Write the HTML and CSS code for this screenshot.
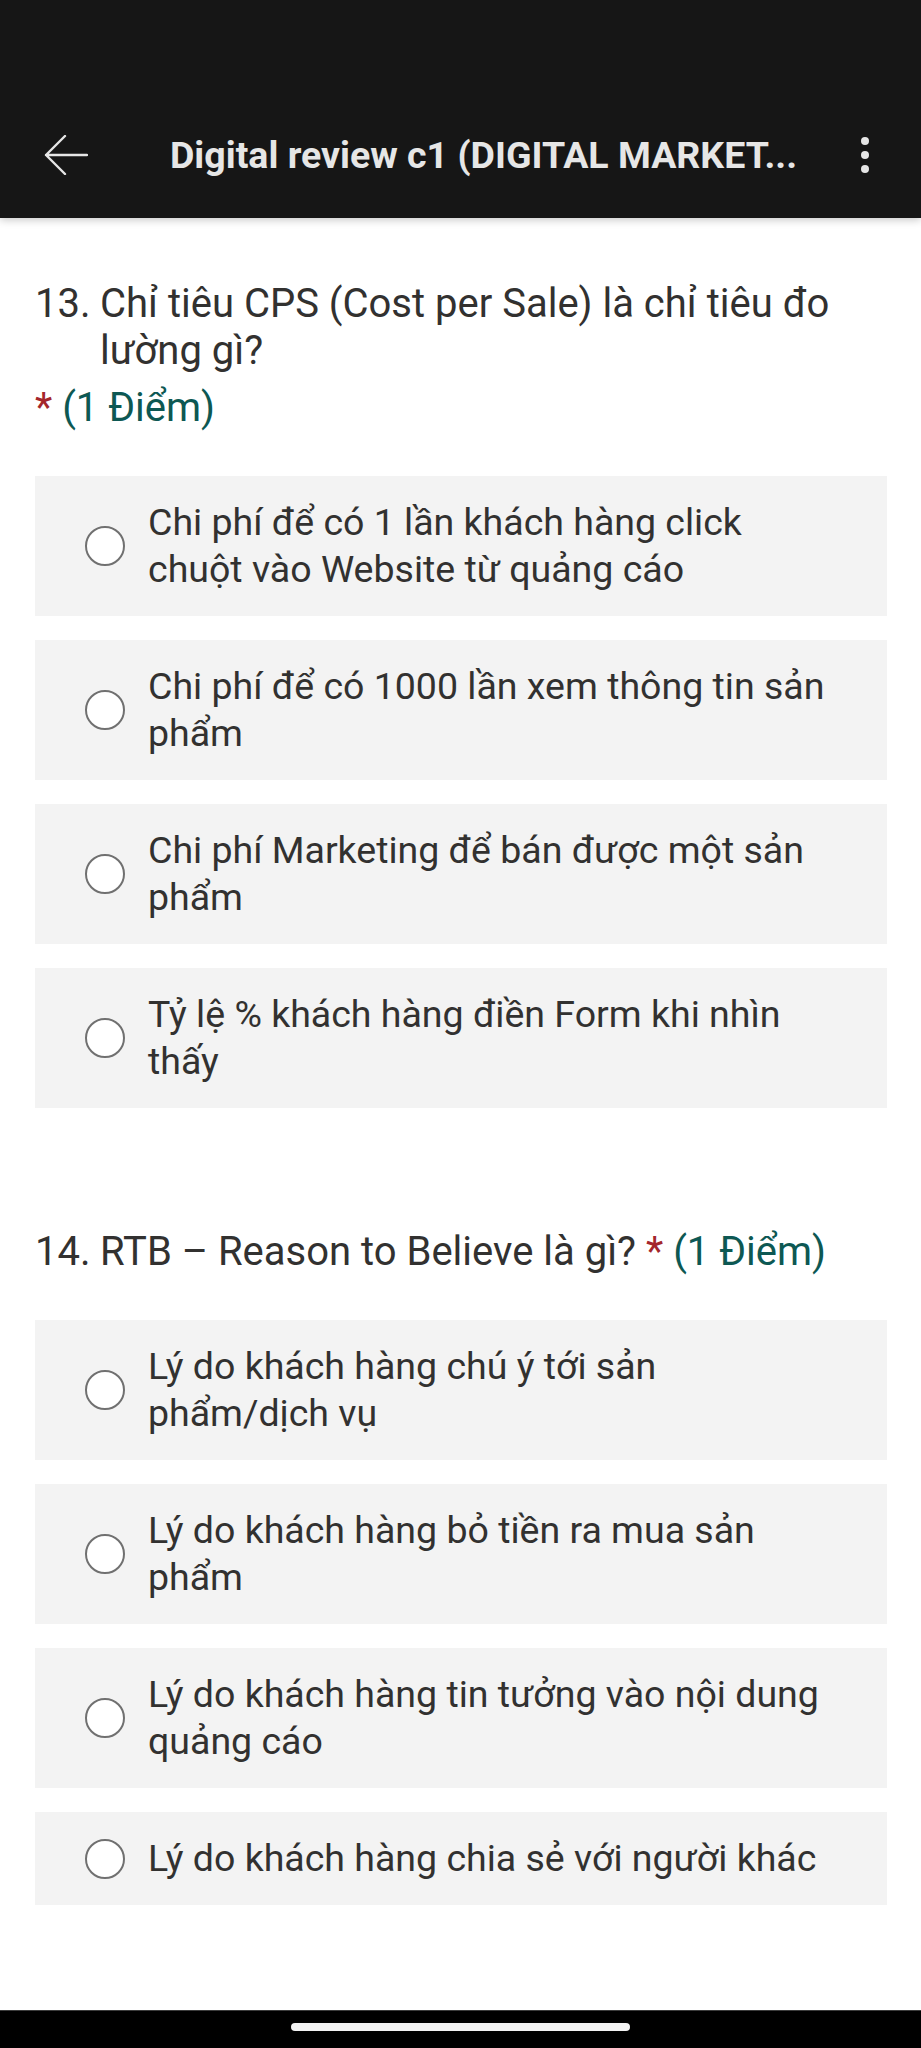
FILE: index.html
```html
<!DOCTYPE html>
<html lang="vi">
<head>
<meta charset="utf-8">
<title>Digital review c1</title>
<link rel="stylesheet" href="styles.css">
</head>
<body>
<header class="appbar">
  <div class="toolbar">
    <svg class="back" width="44" height="40" viewBox="0 0 44 40" aria-hidden="true">
      <path d="M43 20H2M21 1L2 20l19 19" fill="none" stroke="#e6e6e6" stroke-width="2.4" stroke-linecap="round" stroke-linejoin="round"/>
    </svg>
    <h1 class="title">Digital review c1 (DIGITAL MARKET...</h1>
    <svg class="more" width="20" height="40" viewBox="0 0 20 40" aria-hidden="true">
      <circle cx="10" cy="6" r="4" fill="#e6e6e6"/>
      <circle cx="10" cy="20" r="4" fill="#e6e6e6"/>
      <circle cx="10" cy="34" r="4" fill="#e6e6e6"/>
    </svg>
  </div>
</header>

<main class="form">
  <section class="question">
    <div class="qhead">
      <div class="qtitle"><span class="qnum">13.</span><span class="qtext">Chỉ tiêu CPS (Cost per Sale) là chỉ tiêu đo lường gì?</span></div>
      <div class="qmeta"><span class="req">*</span> <span class="pts">(1 Điểm)</span></div>
    </div>
    <div class="choices">
      <label class="choice"><span class="radio"></span><span class="ctext">Chi phí để có 1 lần khách hàng click chuột vào Website từ quảng cáo</span></label>
      <label class="choice"><span class="radio"></span><span class="ctext">Chi phí để có 1000 lần xem thông tin sản phẩm</span></label>
      <label class="choice"><span class="radio"></span><span class="ctext">Chi phí Marketing để bán được một sản phẩm</span></label>
      <label class="choice"><span class="radio"></span><span class="ctext">Tỷ lệ % khách hàng điền Form khi nhìn thấy</span></label>
    </div>
  </section>

  <section class="question">
    <div class="qhead">
      <div class="qtitle"><span class="qnum">14.</span><span class="qtext">RTB – Reason to Believe là gì?</span></div>
      <div class="qmeta"><span class="req">*</span> <span class="pts">(1 Điểm)</span></div>
    </div>
    <div class="choices">
      <label class="choice"><span class="radio"></span><span class="ctext">Lý do khách hàng chú ý tới sản phẩm/dịch vụ</span></label>
      <label class="choice"><span class="radio"></span><span class="ctext">Lý do khách hàng bỏ tiền ra mua sản phẩm</span></label>
      <label class="choice"><span class="radio"></span><span class="ctext">Lý do khách hàng tin tưởng vào nội dung quảng cáo</span></label>
      <label class="choice"><span class="radio"></span><span class="ctext">Lý do khách hàng chia sẻ với người khác</span></label>
    </div>
  </section>
</main>

<footer class="navbar">
  <div class="pill"></div>
</footer>
</body>
</html>
```

FILE: styles.css
```css
* { box-sizing: border-box; }

html, body {
  margin: 0;
  padding: 0;
}

body {
  width: 921px;
  height: 2048px;
  display: flex;
  flex-direction: column;
  background: #ffffff;
  font-family: Roboto, "Noto Sans", "Liberation Sans", sans-serif;
  color: #323130;
  overflow: hidden;
}

/* ---------- App bar ---------- */
.appbar {
  background: #161616;
  height: 218px;
  padding-top: 92px;
  box-shadow: 0 2px 8px rgba(0, 0, 0, 0.22);
  position: relative;
  z-index: 1;
  flex: none;
}

.toolbar {
  height: 126px;
  display: flex;
  align-items: center;
  padding: 0 46px 0 44px;
}

.back { flex: none; display: block; }

.title {
  margin: 0 0 0 82px;
  flex: 1;
  font-size: 37.5px;
  font-weight: 700;
  color: #e6e6e6;
  white-space: nowrap;
  overflow: hidden;
  line-height: 44px;
}

.more { flex: none; display: block; }

/* ---------- Form ---------- */
.form {
  flex: 1;
  padding: 62px 34px 0 35px;
  display: flex;
  flex-direction: column;
  gap: 120px;
}

.question {
  display: flex;
  flex-direction: column;
  gap: 45px;
}

.qhead {
  display: flex;
  flex-wrap: wrap;
  align-items: baseline;
  column-gap: 10px;
  row-gap: 10px;
  font-size: 40px;
  line-height: 47px;
}

.qtitle {
  display: flex;
  min-width: 0;
}

.qnum {
  flex: none;
  width: 65px;
}

.qtext { min-width: 0; }

.qmeta { white-space: nowrap; }

.req { color: #a4262c; }

.pts { color: #0d5853; }

.choices {
  display: flex;
  flex-direction: column;
  gap: 24px;
}

.choice {
  display: flex;
  align-items: center;
  background: #f3f3f3;
  padding: 23px 60px 23px 50px;
  font-size: 37.5px;
  line-height: 47px;
}

.radio {
  flex: none;
  width: 40px;
  height: 40px;
  border-radius: 50%;
  border: 2.5px solid #707070;
  background: #ffffff;
  margin-right: 23px;
}

.ctext { min-width: 0; }

/* ---------- System nav bar ---------- */
.navbar {
  flex: none;
  height: 38px;
  background: #000000;
  border-top: 1px solid #3c3c3c;
  padding-top: 12px;
}

.pill {
  width: 339px;
  height: 8px;
  border-radius: 4px;
  background: #f2f2f2;
  margin: 0 auto;
}
```
